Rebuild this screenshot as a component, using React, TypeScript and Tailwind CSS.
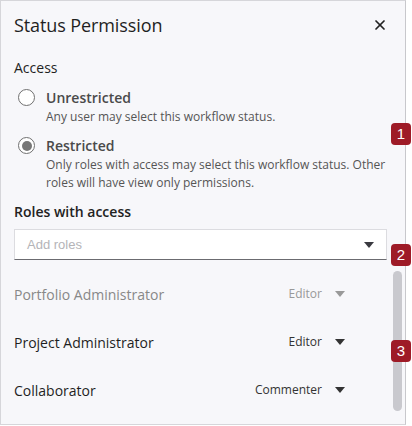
import { X } from 'lucide-react'

const roles = [
  { name: 'Portfolio Administrator', level: 'Editor', disabled: true },
  { name: 'Project Administrator', level: 'Editor', disabled: false },
  { name: 'Collaborator', level: 'Commenter', disabled: false },
]

function Caret({ className = '' }: { className?: string }) {
  return (
    <svg width="10" height="6" viewBox="0 0 10 6" className={className}>
      <path d="M0 0h10L5 6z" fill="currentColor" />
    </svg>
  )
}

function Badge({ n }: { n: number }) {
  return (
    <div className="w-[20px] h-[22px] rounded-[4px] bg-[#9e1b27] text-white text-[15px] leading-[22px] text-center font-['Liberation_Sans',sans-serif]">
      {n}
    </div>
  )
}

function Radio({ checked }: { checked?: boolean }) {
  return (
    <div className="w-[17px] h-[17px] rounded-full border border-[#707070] bg-white flex items-center justify-center shrink-0">
      {checked && <div className="w-[10px] h-[10px] rounded-full bg-[#777]" />}
    </div>
  )
}

export default function App() {
  return (
    <div className="w-[412px] h-[426px] bg-white font-['Open_Sans',sans-serif] relative">
      <div className="w-[406px] h-[425px] bg-[#f7f7fa] border border-[#d6d6da] border-r-[#c8c8cc] flex flex-col">
        <div className="flex items-center justify-between pl-[13px] pr-[17px] h-[48px]">
          <h1 className="text-[18px] text-[#1f1f1f] tracking-[-0.1px]">Status Permission</h1>
          <X className="w-[16px] h-[16px] text-[#222]" strokeWidth={2.6} />
        </div>

        <div className="pl-[13px] pr-[18px] mt-[9px]">
          <div className="text-[14px] text-[#1f1f1f] leading-[20px]">Access</div>

          <div className="flex gap-[11px] mt-[10px] pl-[4px]">
            <div className="pt-[1px]"><Radio /></div>
            <div>
              <div className="text-[14px] font-semibold text-[#4a4a4a] leading-[20px]">Unrestricted</div>
              <div className="text-[12px] text-[#555] leading-[18px]">Any user may select this workflow status.</div>
            </div>
          </div>

          <div className="flex gap-[11px] mt-[10px] pl-[4px]">
            <div className="pt-[1px]"><Radio checked /></div>
            <div>
              <div className="text-[14px] font-semibold text-[#4a4a4a] leading-[20px]">Restricted</div>
              <div className="text-[12px] text-[#555] leading-[18px]">
                Only roles with access may select this workflow status. Other roles will have view only permissions.
              </div>
            </div>
          </div>

          <div className="text-[14px] font-semibold text-[#222] leading-[20px] mt-[10px]">Roles with access</div>

          <div className="mt-[7px] w-[373px] h-[31px] bg-white border border-[#dcdce0] border-b-[#6b6b70] flex items-center justify-between pl-[12px] pr-[12px]">
            <span className="text-[13px] text-[#b4b4b8] font-['Liberation_Sans',sans-serif]">Add roles</span>
            <Caret className="text-[#3a3a40]" />
          </div>
        </div>

        <div className="flex mt-[10px]">
          <div className="flex-1 pl-[13px] pr-[60px] flex flex-col">
            {roles.map((r) => (
              <div key={r.name} className="flex items-center justify-between h-[48px]">
                <span className={`text-[14px] ${r.disabled ? 'text-[#888]' : 'text-[#1f1f1f]'}`}>{r.name}</span>
                <div className={`flex items-center gap-[13px] ${r.disabled ? 'text-[#999]' : 'text-[#333]'}`}>
                  <span className="text-[12px]">{r.level}</span>
                  <Caret />
                </div>
              </div>
            ))}
          </div>
        </div>
        <div className="absolute left-[393px] top-[271px] w-[9px] h-[140px] rounded-full bg-[#c9c9ce]" />
      </div>

      <div className="absolute left-[391px] top-[123px]"><Badge n={1} /></div>
      <div className="absolute left-[391px] top-[244px]"><Badge n={2} /></div>
      <div className="absolute left-[391px] top-[340px]"><Badge n={3} /></div>
    </div>
  )
}
